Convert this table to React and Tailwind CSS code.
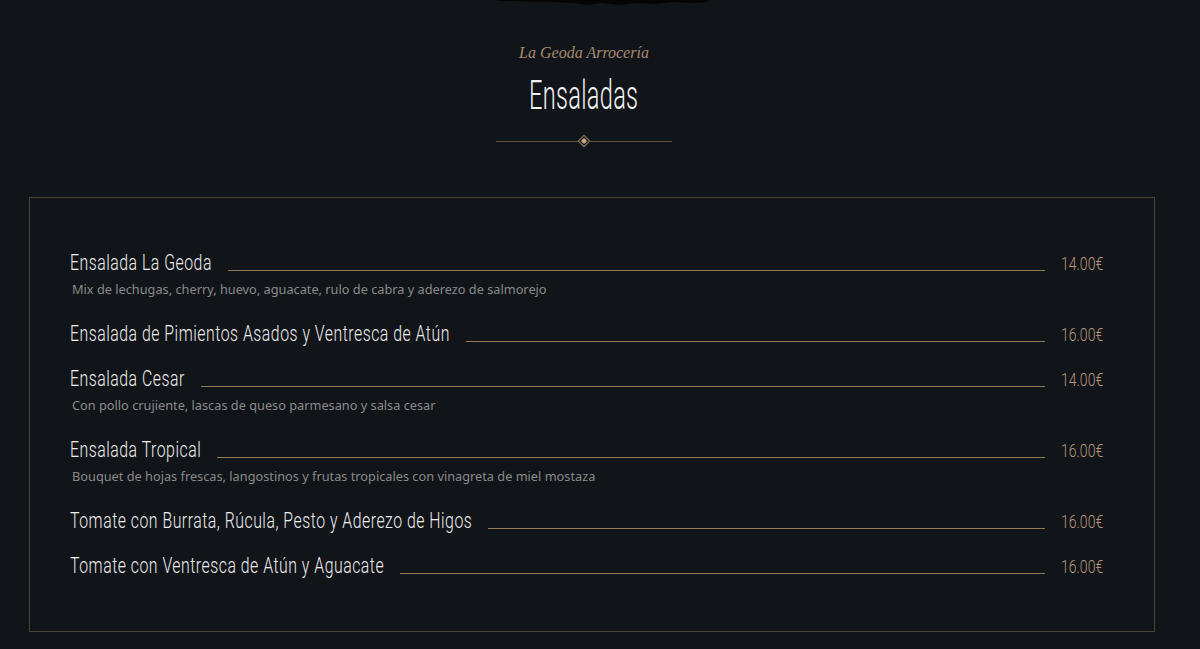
import React, { useLayoutEffect, useRef, useState } from 'react';

const items = [
  {
    name: 'Ensalada La Geoda',
    desc: 'Mix de lechugas, cherry, huevo, aguacate, rulo de cabra y aderezo de salmorejo',
    price: '14.00€',
  },
  { name: 'Ensalada de Pimientos Asados y Ventresca de Atún', price: '16.00€' },
  {
    name: 'Ensalada Cesar',
    desc: 'Con pollo crujiente, lascas de queso parmesano y salsa cesar',
    price: '14.00€',
  },
  {
    name: 'Ensalada Tropical',
    desc: 'Bouquet de hojas frescas, langostinos y frutas tropicales con vinagreta de miel mostaza',
    price: '16.00€',
  },
  { name: 'Tomate con Burrata, Rúcula, Pesto y Aderezo de Higos', price: '16.00€' },
  { name: 'Tomate con Ventresca de Atún y Aguacate', price: '16.00€' },
];

const NAME_SCALE = 0.72;

// Squeezed text (no condensed font installed), keeps the layout width in sync
const CondensedName = ({ children }) => {
  const ref = useRef(null);
  const [w, setW] = useState(0);

  useLayoutEffect(() => {
    const measure = () => ref.current && setW(ref.current.offsetWidth);
    measure();
    document.fonts?.ready.then(measure);
  }, []);

  return (
    <span
      ref={ref}
      className="inline-block origin-left scale-x-[0.72] whitespace-nowrap text-[22px] leading-[26px] font-light text-[#eeeeee] tracking-[0.7px] font-['Roboto',sans-serif]"
      style={{ marginRight: -Math.round((1 - NAME_SCALE) * w) }}
    >
      {children}
    </span>
  );
};

const MenuItem = ({ item }) => (
  <div className="mb-[19px]">
    <div className="flex items-start h-[26px]">
      <CondensedName>{item.name}</CondensedName>
      <div className="flex-1 border-t border-[#94785a] ml-[16px] mr-[17px] mt-[20px]" />
      <div className="w-[41px] flex justify-end">
        <span className="inline-block origin-right scale-x-[0.78] whitespace-nowrap text-[18px] leading-[28px] font-light text-[#b8987a] font-['Roboto',sans-serif]">
          {item.price}
        </span>
      </div>
    </div>
    {item.desc && (
      <p className="h-[26px] leading-[26px] pl-[2px] text-[12.75px] text-[#8a8a8a] font-['Noto_Sans',sans-serif]">
        {item.desc}
      </p>
    )}
  </div>
);

export default function App() {
  return (
    <div className="relative min-h-[649px] bg-[#111419] overflow-hidden">
      {/* brush stroke at top */}
      <svg className="absolute left-[495px] top-0" width="215" height="7" viewBox="0 0 215 7">
        <path
          d="M0 0 H215 L212 2 L196 3 L178 2 L160 4 L142 3 L124 5 L106 3 L92 5 L78 3 L60 2 L40 2 L20 1 L5 1 Z"
          fill="#050505"
        />
      </svg>

      <div className="flex flex-col items-center pt-[42px] pr-[32px]">
        <p className="text-[16px] italic text-[#a88b6c] font-['Liberation_Serif',serif] leading-[22px]">
          La Geoda Arrocería
        </p>
        <h1 className="mt-[10px] inline-block scale-x-[0.59] text-[40px] leading-[44px] font-light text-[#f2f2f2] tracking-[0.5px] font-['Roboto',sans-serif]">
          Ensaladas
        </h1>
        <div className="mt-[16px] flex items-center">
          <div className="w-[83px] h-px bg-[#5b4f43]" />
          <svg width="14" height="14" viewBox="0 0 14 14" className="mx-[-2px]">
            <rect x="3" y="3" width="8" height="8" transform="rotate(45 7 7)" fill="none" stroke="#8a725a" strokeWidth="1.2" />
            <rect x="4.8" y="4.8" width="4.4" height="4.4" transform="rotate(45 7 7)" fill="#c9a781" />
          </svg>
          <div className="w-[83px] h-px bg-[#5b4f43]" />
        </div>
      </div>

      <div className="mt-[49px] ml-[29px] w-[1126px] border border-[#4a4239] pt-[52px] pb-[14px] pl-[40px] pr-[51px]">
        {items.map((item) => (
          <MenuItem key={item.name} item={item} />
        ))}
        <div className="h-[19px]" />
      </div>
    </div>
  );
}
